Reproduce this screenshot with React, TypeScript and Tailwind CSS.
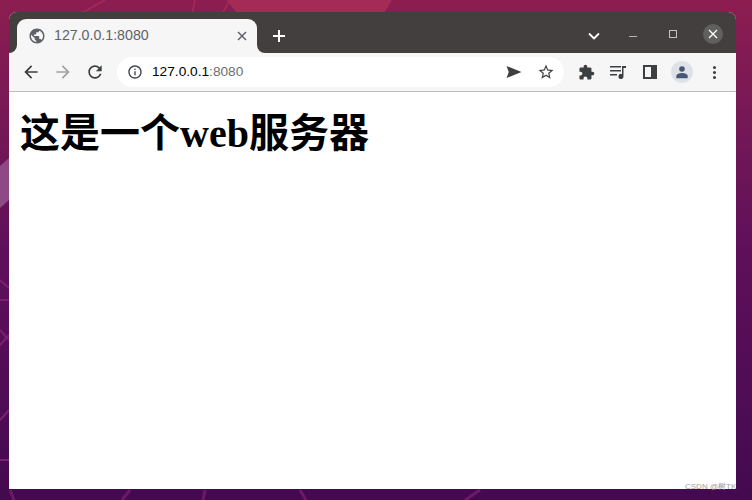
import React from 'react';

function Icon({ d, className }: { d: string; className: string }) {
  return (
    <svg viewBox="0 0 24 24" fill="currentColor" className={className}>
      <path d={d} />
    </svg>
  );
}

const globe = 'M12 2C6.48 2 2 6.48 2 12s4.48 10 10 10 10-4.48 10-10S17.52 2 12 2zm-1 17.93c-3.95-.49-7-3.85-7-7.93 0-.62.08-1.21.21-1.79L9 15v1c0 1.1.9 2 2 2v1.93zm6.9-2.54c-.26-.81-1-1.39-1.9-1.39h-1v-3c0-.55-.45-1-1-1H8v-2h2c.55 0 1-.45 1-1V7h2c1.1 0 2-.9 2-2v-.41c2.93 1.19 5 4.06 5 7.41 0 2.08-.8 3.97-2.1 5.39z';
const puzzle = 'M20.5 11H19V7c0-1.1-.9-2-2-2h-4V3.5C13 2.12 11.88 1 10.5 1S8 2.12 8 3.5V5H4c-1.1 0-1.99.9-1.99 2v3.8H3.5c1.49 0 2.7 1.21 2.7 2.7s-1.21 2.7-2.7 2.7H2V20c0 1.1.9 2 2 2h3.8v-1.5c0-1.49 1.21-2.7 2.7-2.7 1.49 0 2.7 1.21 2.7 2.7V22H17c1.1 0 2-.9 2-2v-4h1.5c1.38 0 2.5-1.12 2.5-2.5S21.88 11 20.5 11z';
const send = 'M2 20l20-8L2 4l3 8z';
const star = 'M22 9.24l-7.19-.62L12 2 9.19 8.63 2 9.24l5.46 4.73L5.82 21 12 17.27 18.18 21l-1.63-7.03L22 9.24zM12 15.4l-3.76 2.27 1-4.28-3.32-2.88 4.38-.38L12 6.1l1.71 4.04 4.38.38-3.32 2.88 1 4.28L12 15.4z';
const reload = 'M17.65 6.35C16.2 4.9 14.21 4 12 4c-4.42 0-7.99 3.58-7.99 8s3.57 8 7.99 8c3.73 0 6.84-2.55 7.73-6h-2.08c-.82 2.33-3.04 4-5.65 4-3.31 0-6-2.69-6-6s2.69-6 6-6c1.66 0 3.14.69 4.22 1.78L13 11h7V4l-2.35 2.35z';
const arrow = 'M20 11H7.83l5.59-5.59L12 4l-8 8 8 8 1.41-1.41L7.83 13H20v-2z';
const info = 'M11 7h2v2h-2zm0 4h2v6h-2zm1-9C6.48 2 2 6.48 2 12s4.48 10 10 10 10-4.48 10-10S17.52 2 12 2zm0 18c-4.41 0-8-3.59-8-8s3.59-8 8-8 8 3.59 8 8-3.59 8-8 8z';

export default function App() {
  return (
    <div className="relative h-[500px] w-[752px] overflow-hidden bg-gradient-to-b from-[#8c1d50] via-[#5f0f5a] to-[#430a4f] pt-3 pl-[9px] pr-[16px] pb-[11px] font-['Liberation_Sans',sans-serif]">
      {/* wallpaper streaks */}
      <svg viewBox="0 0 752 500" className="absolute inset-0 h-[500px] w-[752px]">
        <polygon points="226,0 392,0 384,14 238,14" fill="#a32b55" />
        <path d="M105 0L80 14M195 0L192 14M230 0L222 14" stroke="#a32b55" strokeWidth="1.5" />
        <polygon points="0,166 9,158 9,200 0,208" fill="#8e4a85" />
        <path d="M0 280L9 288M0 300H9M0 345L9 335M0 330L9 340M0 420L9 410M0 460H9" stroke="#7a2070" strokeWidth="2" />
        <path d="M130 490L122 500M205 490L203 500M300 490L306 500M480 490L465 500M10 490L14 500" stroke="#6b1a6b" strokeWidth="3" />
      </svg>

      <div className="relative flex h-full flex-col overflow-hidden rounded-t-[8px] bg-white">
        {/* tab strip */}
        <div className="flex h-[41px] shrink-0 items-end bg-[#433f3f] pl-2">
          <div className="relative flex h-[34px] w-[240px] items-center rounded-t-[9px] bg-[#f6f6f6] pl-[11px] pr-[10px]">
            <div className="absolute -left-2 bottom-0 h-2 w-2 bg-[#f6f6f6]">
              <div className="h-full w-full rounded-br-[8px] bg-[#433f3f]" />
            </div>
            <div className="absolute -right-2 bottom-0 h-2 w-2 bg-[#f6f6f6]">
              <div className="h-full w-full rounded-bl-[8px] bg-[#433f3f]" />
            </div>
            <Icon d={globe} className="h-[18px] w-[18px] text-[#5f6368]" />
            <span className="ml-[8px] text-[14.2px] text-[#5f6368]">127.0.0.1:8080</span>
            <svg viewBox="0 0 10 10" className="ml-auto h-[10px] w-[10px] text-[#5f6368]" stroke="currentColor" strokeWidth="1.5">
              <path d="M1 1l8 8M9 1l-8 8" />
            </svg>
          </div>
          <svg viewBox="0 0 14 14" className="mb-[10px] ml-[15px] h-[14px] w-[14px] text-white" stroke="currentColor" strokeWidth="2">
            <path d="M7 1v12M1 7h12" />
          </svg>
          <svg viewBox="0 0 12 8" className="mb-[13px] ml-[302px] h-2 w-3 text-white" fill="none" stroke="currentColor" strokeWidth="1.8">
            <path d="M1 1.5l5 5 5-5" />
          </svg>
          <div className="mb-[16px] ml-[29px] h-px w-2 bg-[#b4b2b2]" />
          <div className="mb-[15px] ml-[32px] h-2 w-2 border border-[#c4c2c2]" />
          <div className="mb-[9px] ml-[26px] flex h-5 w-5 items-center justify-center rounded-full bg-[#625f5f]">
            <svg viewBox="0 0 10 10" className="h-[10px] w-[10px] text-white" stroke="currentColor" strokeWidth="1.3">
              <path d="M1 1l8 8M9 1l-8 8" />
            </svg>
          </div>
        </div>

        {/* toolbar */}
        <div className="flex h-[39px] shrink-0 items-center border-b border-[#bdbdbd] bg-[#f6f6f6] pl-[6px]">
          <div className="flex w-8 justify-center">
            <Icon d={arrow} className="h-[20px] w-[20px] text-[#3c4043]" />
          </div>
          <div className="flex w-8 justify-center">
            <Icon d={arrow} className="h-[20px] w-[20px] rotate-180 text-[#a0a2a4]" />
          </div>
          <div className="flex w-8 justify-center">
            <Icon d={reload} className="h-[20px] w-[20px] text-[#3c4043]" />
          </div>
          <div className="ml-[6px] flex h-[30px] w-[447px] items-center rounded-full bg-white pl-[10px] pr-[9px]">
            <Icon d={info} className="h-[16px] w-[16px] text-[#3c4043]" />
            <span className="ml-[9px] text-[13.7px] text-black">
              127.0.0.1<span className="text-[#6f6f6f]">:8080</span>
            </span>
            <Icon d={send} className="ml-auto h-[18px] w-[18px] text-[#3c4043]" />
            <Icon d={star} className="ml-[14px] h-[18px] w-[18px] text-[#3c4043]" />
          </div>
          <div className="ml-[6px] flex w-8 justify-center">
            <Icon d={puzzle} className="h-[17px] w-[17px] text-[#3c4043]" />
          </div>
          <div className="flex w-8 justify-center">
            <svg viewBox="0 0 18 14" className="h-[14px] w-[18px] text-[#3c4043]" fill="currentColor">
              <path d="M1 1h11v1.5H1zM1 5h11v1.5H1zM1 9h7v1.5H1zM13 1h4v2h-2.5v8.5a2.5 2.5 0 1 1-1.5-2.3z" />
            </svg>
          </div>
          <div className="flex w-8 justify-center">
            <div className="flex h-[14px] w-[14px] justify-end border-2 border-[#3c4043]">
              <div className="w-[4px] bg-[#3c4043]" />
            </div>
          </div>
          <div className="flex w-8 justify-center">
            <div className="flex h-[22px] w-[22px] items-center justify-center rounded-full bg-[#dfe1e8]">
              <svg viewBox="0 0 16 16" className="h-[14px] w-[14px] text-[#475672]" fill="currentColor">
                <circle cx="8" cy="4.5" r="3.2" />
                <path d="M1.5 15v-2.5C1.5 10 5 9 8 9s6.5 1 6.5 3.5V15z" />
              </svg>
            </div>
          </div>
          <div className="flex w-8 justify-center">
            <div className="flex flex-col gap-[2px]">
              <div className="h-[3px] w-[3px] rounded-full bg-[#3c4043]" />
              <div className="h-[3px] w-[3px] rounded-full bg-[#3c4043]" />
              <div className="h-[3px] w-[3px] rounded-full bg-[#3c4043]" />
            </div>
          </div>
        </div>

        {/* page */}
        <div className="flex-1 bg-white px-[11px] pt-[19px]">
          <h1 className="text-[40px] font-bold leading-[46px] text-black font-['Liberation_Serif','Noto_Sans_CJK_SC',serif]">这是一个web服务器</h1>
        </div>
      </div>
      <span className="absolute bottom-[8px] left-[685px] text-[8px] leading-[10px] text-[#a0a0a0]">CSDN @树TK</span>
    </div>
  );
}
